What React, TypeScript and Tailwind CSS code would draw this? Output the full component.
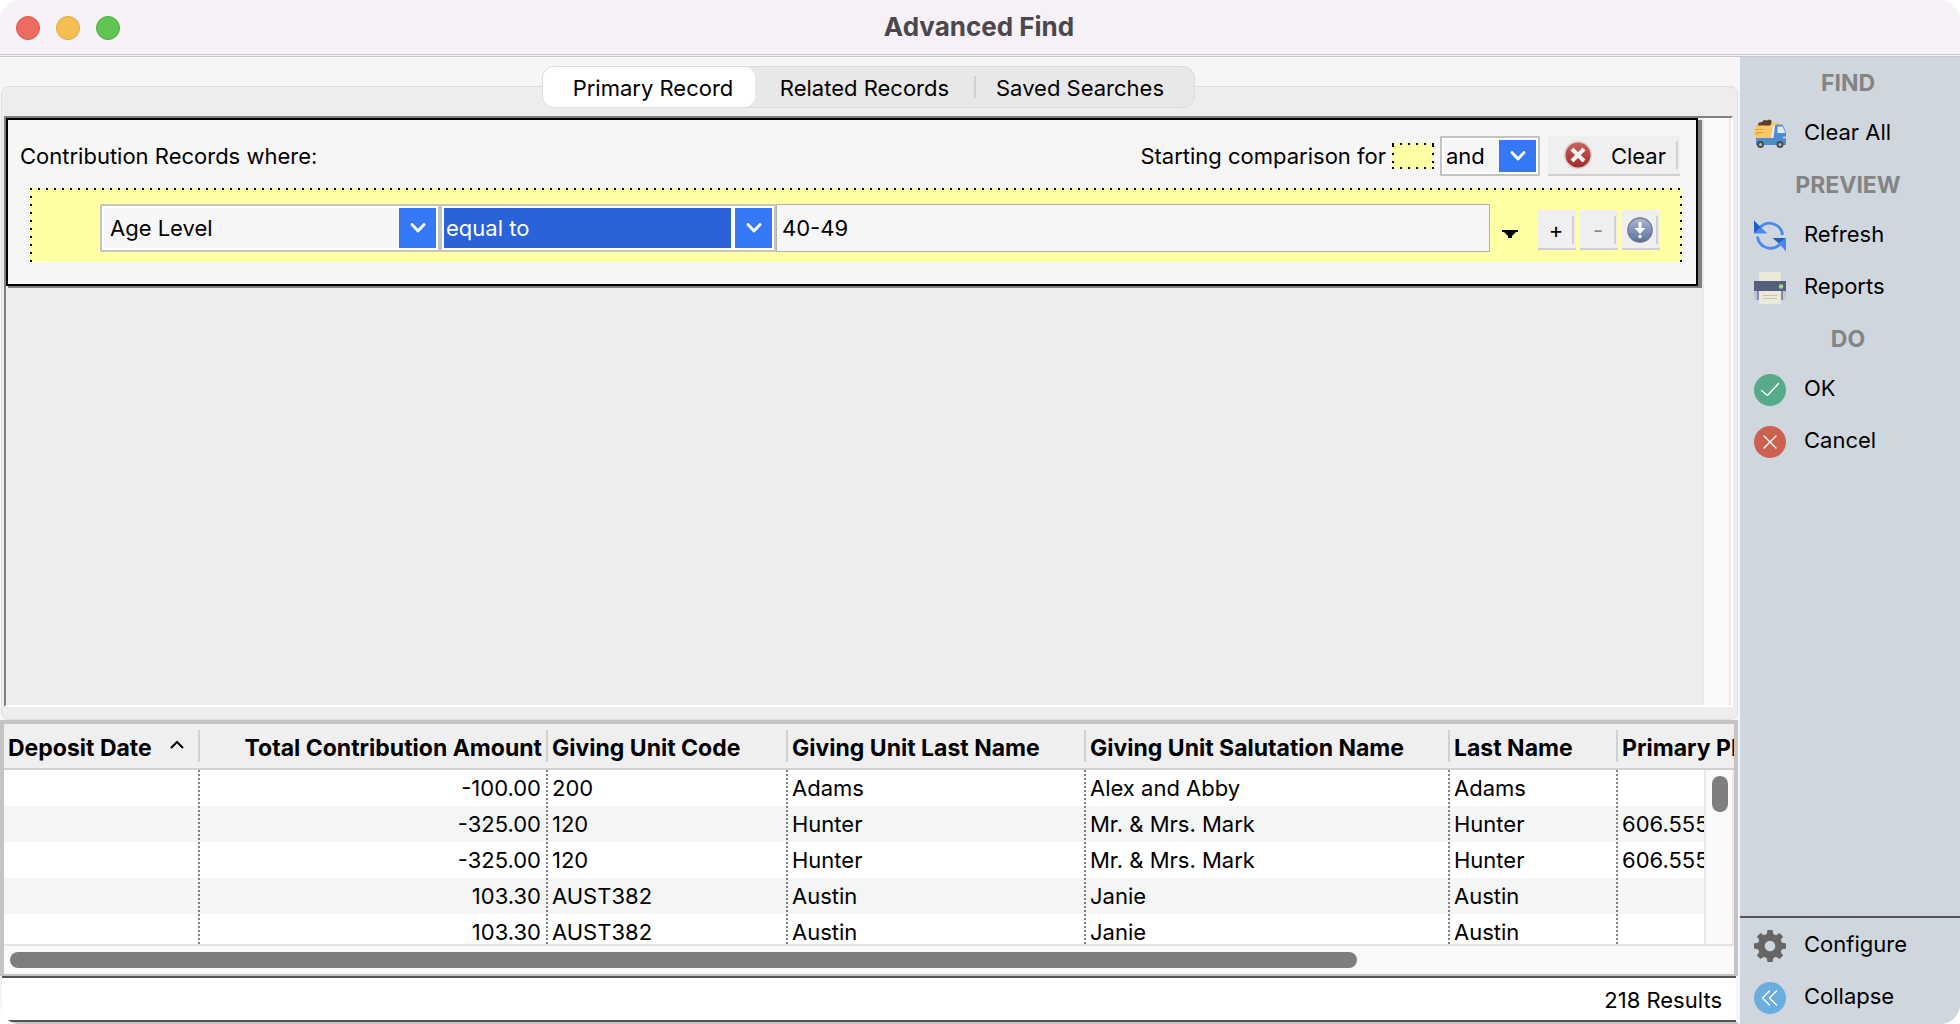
import React from "react";

const FONT = "font-[Inter,'Liberation_Sans',sans-serif]";

const dotsX = "bg-[repeating-linear-gradient(90deg,#000_0_2px,transparent_2px_8px)]";
const dotsY = "bg-[repeating-linear-gradient(180deg,#000_0_2px,transparent_2px_8px)]";

function TruckIcon() {
  return (
    <svg viewBox="0 0 32 32" className="size-8 shrink-0" aria-hidden="true">
      <path d="M3.500 8 5 4.500l3-.5 2-2 3 .5L15 1.500l2.500 1V6L15 9H4z" fill="#5f3c28" />
      <path d="M3 7.500h13l2.500-3h6L19 21H2Q1 19 1 17l-1-1 1-2-1-2 1-2z" fill="#f9c963" />
      <path d="M1 11.500h8M2 14.500h8M1 16h4" stroke="#dba049" strokeWidth="1" />
      <path d="M16.500 21 19 7.500h4v13z" fill="#e6ebf2" />
      <path d="M21 8q0-1.500 1.500-1.500H27q1.500 0 2.200 1.500L32 14v13H2v-7h17.500z" fill="#4c8cd2" />
      <path d="M23.500 8.500h5L31.500 15h-8z" fill="#dfe9f3" />
      <path d="M29 18.500h3v2h-3z" fill="#a8cdf0" />
      <circle cx="6.500" cy="26.500" r="3.500" fill="#4a4a4a" />
      <circle cx="6.500" cy="26.500" r="1.500" fill="#bbb" />
      <circle cx="26" cy="26.500" r="3.500" fill="#4a4a4a" />
      <circle cx="26" cy="26.500" r="1.500" fill="#bbb" />
    </svg>
  );
}
function RefreshIcon() {
  return (
    <svg viewBox="0 0 32 32" className="size-8 shrink-0" aria-hidden="true">
      <path d="M6 7.500A13 13 0 0 1 28.500 15" fill="none" stroke="#4788f4" strokeWidth="2.800" />
      <path d="M26 24A13 13 0 0 1 3.500 16.500" fill="none" stroke="#4788f4" strokeWidth="2.800" />
      <path d="M0 .5v13L7 7.500z" fill="#1f5fc8" />
      <path d="M0 13.500h13.500L7 7.500z" fill="#4788f4" />
      <path d="M18.500 18H32l-7 5.500z" fill="#1f5fc8" />
      <path d="M32 18v13.500l-7-8z" fill="#4788f4" />
    </svg>
  );
}
function PrinterIcon() {
  return (
    <svg viewBox="0 0 32 32" className="size-8 shrink-0" aria-hidden="true">
      <path d="M0 18h32v8l-2 2H2l-2-2z" fill="#c3c5c7" />
      <path d="M3 18h26v10H3z" fill="#7f8ac0" />
      <path d="M5 0h22v10H5z" fill="#ece9d8" />
      <path d="M0 9h32v10H0z" fill="#575f80" />
      <path d="M5 19h22v13H5z" fill="#ece9d8" />
      <path d="M9 23.500h14M9 26.500h14" stroke="#c9c5ac" strokeWidth="1" />
      <circle cx="27" cy="14.500" r="2.200" fill="#a4e06a" />
    </svg>
  );
}
function RoundIcon({ fill, d }: { fill: string; d: string }) {
  return (
    <svg viewBox="0 0 32 32" className="size-8 shrink-0" aria-hidden="true">
      <circle cx="16" cy="16" r="16" fill={fill} />
      <path d={d} fill="none" stroke="#fff" strokeWidth="1.300" strokeLinecap="round" strokeLinejoin="round" />
    </svg>
  );
}
function GearIcon() {
  return (
    <svg viewBox="0 0 32 32" className="size-8 shrink-0" aria-hidden="true">
      <g fill="#666">
        {[0, 45, 90, 135].map((a) => (
          <path key={a} d="M12.500 5 13.500 0h5l1 5v22l-1 5h-5l-1-5z" transform={`rotate(${a} 16 16)`} />
        ))}
        <circle cx="16" cy="16" r="12.200" />
      </g>
      <circle cx="16" cy="16" r="5.300" fill="#d0d6de" />
    </svg>
  );
}
function Chevron() {
  return (
    <svg viewBox="0 0 16 10" className="h-[10px] w-4" aria-hidden="true">
      <path d="m2 1.500 6 6.500 6-6.500" fill="none" stroke="#fff" strokeWidth="2.800" strokeLinecap="round" strokeLinejoin="round" />
    </svg>
  );
}

function Picker({ label, value, className, textClass }: { label: string; value: string; className: string; textClass: string }) {
  return (
    <div className={`relative flex shrink-0 border-2 border-[#c4c4c4] bg-white p-[2px] ${className}`}>
      <select aria-label={label} defaultValue={value} className={`min-w-0 flex-1 appearance-none outline-none ${textClass}`}>
        <option>{value}</option>
      </select>
      <span className="pointer-events-none flex w-[37px] shrink-0 items-center justify-center bg-[#3478f6]">
        <Chevron />
      </span>
    </div>
  );
}

function SmallButton({ label, children }: { label: string; children: React.ReactNode }) {
  return (
    <button aria-label={label} className="flex h-10 w-[38px] border-b-2 border-[#d0d0d0] bg-[#efefef] py-1.5 pr-0.5">
      <span className="flex h-7 flex-1 items-center justify-center border-r-2 border-[#d0d0d0] pl-0.5">{children}</span>
    </button>
  );
}

function SideHeading({ children }: { children: React.ReactNode }) {
  return <h2 className="flex h-[50px] items-center justify-center pr-1 pb-px text-[23px] font-bold text-[#848484]">{children}</h2>;
}
function SideItem({ icon, children }: { icon: React.ReactNode; children: React.ReactNode }) {
  return (
    <button className="flex h-[52px] w-full items-center gap-[18px] pl-[14px] text-left">
      {icon}
      <span className="pb-1">{children}</span>
    </button>
  );
}

const columns = [
  { name: "Deposit Date", w: "w-[196px]" },
  { name: "Total Contribution Amount", w: "w-[348px]" },
  { name: "Giving Unit Code", w: "w-[240px]" },
  { name: "Giving Unit Last Name", w: "w-[298px]" },
  { name: "Giving Unit Salutation Name", w: "w-[364px]" },
  { name: "Last Name", w: "w-[168px]" },
  { name: "Primary Phone", w: "" },
];
const rows = [
  ["", "-100.00", "200", "Adams", "Alex and Abby", "Adams", ""],
  ["", "-325.00", "120", "Hunter", "Mr. & Mrs. Mark", "Hunter", "606.555"],
  ["", "-325.00", "120", "Hunter", "Mr. & Mrs. Mark", "Hunter", "606.555"],
  ["", "103.30", "AUST382", "Austin", "Janie", "Austin", ""],
  ["", "103.30", "AUST382", "Austin", "Janie", "Austin", ""],
];

function Criteria() {
  return (
    <section className="mr-1 border-2 border-black bg-[#f6f6f6] px-[14px] pt-4 pb-[22px] shadow-[2px_2px_0_#808080,4px_2px_0_#808080]">
      <div className="flex h-10 items-center justify-end pr-0.5">
        <span className="mr-auto -ml-0.5">Contribution Records where:</span>
        <span>Starting comparison for</span>
        <span className="mx-1.5 flex h-[26px] w-[42px] flex-col bg-[#ffffa3]">
          <span className={`h-0.5 ${dotsX}`} />
          <span className="flex flex-1 justify-between">
            <span className={`w-0.5 ${dotsY}`} />
            <span className={`w-0.5 ${dotsY}`} />
          </span>
          <span className={`h-0.5 ${dotsX}`} />
        </span>
        <Picker label="Join" value="and" className="h-10 w-[100px]" textClass="pl-0.5 bg-[#f6f6f6]" />
        <button className="ml-2 flex h-10 w-[132px] items-center border-b-2 border-[#d0d0d0] bg-[#efefef] pr-0.5 pl-4">
          <svg viewBox="0 0 28 28" className="size-7" aria-hidden="true">
            <defs><linearGradient id="stop" x2="0" y2="1"><stop stopColor="#c4625d" /><stop offset="1" stopColor="#a52a25" /></linearGradient></defs>
            <circle cx="14" cy="14" r="14" fill="#d6d2d2" />
            <circle cx="14" cy="14" r="12.500" fill="url(#stop)" />
            <path d="m8 8 12 12m0-12L8 20" stroke="#f4f4f4" strokeWidth="4" />
          </svg>
          <span className="ml-auto flex h-7 items-center border-r-2 border-[#d0d0d0] pt-0.5 pr-2.5">Clear</span>
        </button>
      </div>
      <div className="mt-3 ml-2 flex h-[74px] flex-col bg-[#ffffa3]">
        <span className={`h-0.5 ${dotsX}`} />
        <div className="flex flex-1">
          <span className={`mt-1.5 w-0.5 ${dotsY}`} />
          <div className="flex flex-1 items-center pt-1 pr-5 pl-[68px]">
            <div className="flex h-12 flex-1">
              <Picker label="Field" value="Age Level" className="w-[340px]" textClass="bg-[#f6f6f6] pl-1.5" />
              <Picker label="Operator" value="equal to" className="w-[336px]" textClass="mr-1 bg-[#2962d9] pl-0.5 text-white" />
              <input aria-label="Value" defaultValue="40-49" className="min-w-0 flex-1 border border-[#b0b0b0] bg-[#f6f6f6] px-[5px] outline-none" />
            </div>
            <button aria-label="Show values" className="flex w-12 pt-3 pl-3">
              <svg viewBox="0 0 16 8" className="h-2 w-4" aria-hidden="true"><path d="M0 0h16v2h-2L10 6v2H6V6L2 2H0z" /></svg>
            </button>
            <div className="flex gap-1 pt-1">
              <SmallButton label="Add">+</SmallButton>
              <SmallButton label="Remove"><span className="text-[#8c8c8c]">-</span></SmallButton>
              <SmallButton label="Insert">
                <svg viewBox="0 0 26 26" className="size-[26px]" aria-hidden="true">
                  <defs><linearGradient id="orb" x2="0" y2="1"><stop stopColor="#a9b9d2" /><stop offset="1" stopColor="#5a7098" /></linearGradient></defs>
                  <circle cx="13" cy="13" r="12.200" fill="url(#orb)" stroke="#66748f" strokeWidth="1.200" />
                  <path d="M11.500 5h3v6h4L13 17l-5.500-6h4z" fill="#fff" />
                  <circle cx="13" cy="19.500" r="1.800" fill="#fff" />
                </svg>
              </SmallButton>
            </div>
          </div>
          <span className={`mt-1.5 w-0.5 ${dotsY}`} />
        </div>
      </div>
    </section>
  );
}

export default function App() {
  return (
    <div className="min-h-screen bg-white">
      <div className={`flex min-h-screen flex-col overflow-hidden rounded-[20px] bg-[#f6f6f6] text-[22px] leading-7 text-black ${FONT}`}>
        <header className="flex h-[57px] items-center gap-4 border-b-3 border-double border-[#cac4cc] bg-[#f6f0f7] pt-0.5 pl-4">
          <button aria-label="Close" className="size-6 rounded-full border border-[#d8564b] bg-[#ed6b60]" />
          <button aria-label="Minimize" className="size-6 rounded-full border border-[#dca73f] bg-[#f5bf4f]" />
          <button aria-label="Zoom" className="size-6 rounded-full border border-[#4fac40] bg-[#61c554]" />
          <h1 className="mr-[138px] flex-1 pb-0.5 text-center text-[26px] font-bold text-[#4b474c]">Advanced Find</h1>
        </header>

        <div className="flex flex-1">
          <main className="flex min-w-0 flex-1 flex-col pr-0.5">
            <div className="flex flex-1 flex-col pt-[29px] pl-px">
              <div className="flex flex-1 flex-col rounded-[8px] border border-[#dedede] bg-[#ededed] pr-1 pb-3 pl-0.5">
                <nav role="tablist" className="-mt-[21px] mb-2 flex h-[42px] self-center rounded-[12px] border border-[#dcdcdc] bg-[#e8e8e8] pr-[30px]">
                  <button role="tab" aria-selected="true" className="w-[212px] rounded-[11px] bg-white pt-0.5 pl-2">Primary Record</button>
                  <button role="tab" aria-selected="false" className="w-[219px] pt-0.5">Related Records</button>
                  <span className="my-[9px] w-0.5 bg-[#d0d0d0]" />
                  <button role="tab" aria-selected="false" className="pt-0.5 pl-5">Saved Searches</button>
                </nav>
                <div className="flex flex-1 border-2 border-t-[#808080] border-r-white border-b-white border-l-[#808080]">
                  <div className="min-w-0 flex-1">
                    <Criteria />
                  </div>
                  <div className="w-[29px] border-x-2 border-[#e9e9e9] bg-[#fafafa]" />
                </div>
              </div>
            </div>

            <div className="border-4 border-b-2 border-[#c4c4c4] bg-[#fafafa]">
              <div className="relative h-[222px] overflow-hidden border-b-2 border-[#e4e4e4]">
                <table className="w-full table-fixed border-separate border-spacing-0 bg-white text-left">
                  <thead>
                    <tr className="h-[46px]">
                      {columns.map((c, i) => (
                        <th key={c.name} scope="col" className={`border-b-2 border-[#d0d0d0] bg-[#efefef] p-0 text-[23px] font-bold whitespace-nowrap ${c.w}`}>
                          <div className={`my-1.5 flex h-8 items-center pt-1 pl-1 ${i < 6 ? "border-r-2 border-[#d0d0d0]" : ""} ${i === 1 ? "justify-end pr-1" : ""}`}>
                            {c.name}
                            {i === 0 && (
                              <svg viewBox="0 0 14 10" className="mb-1.5 ml-[18px] h-[10px] w-[14px]" aria-hidden="true">
                                <path d="m1 8 6-6 6 6" fill="none" stroke="#000" strokeWidth="2" />
                              </svg>
                            )}
                          </div>
                        </th>
                      ))}
                    </tr>
                  </thead>
                  <tbody>
                    {rows.map((r, n) => (
                      <tr key={n} className={n % 2 ? "bg-[#f4f5f5]" : "bg-white"}>
                        {r.map((v, i) => (
                          <td key={i} className="p-0">
                            <div className="flex h-9">
                              <span className={`min-w-0 flex-1 pt-1 pl-1 whitespace-nowrap ${i === 1 ? "pr-[5px] text-right" : ""}`}>{v}</span>
                              {i < 6 && <span className="w-0.5 bg-[repeating-linear-gradient(180deg,#808080_0_2px,transparent_2px_4px)]" />}
                            </div>
                          </td>
                        ))}
                      </tr>
                    ))}
                  </tbody>
                </table>
                <div className="absolute top-[46px] right-0 bottom-0 w-[30px] border-x-2 border-[#e9e9e9] bg-[#fafafa] px-1.5 pt-1.5">
                  <div className="h-9 w-4 rounded-full bg-[#7e7e7e]" />
                </div>
              </div>
              <div className="h-7 px-1.5 py-1.5">
                <div className="h-4 w-[78.4%] rounded-full bg-[#7e7e7e]" />
              </div>
            </div>
            <footer className="mx-0.5 flex h-[46px] items-center justify-end border-y-2 border-[#545454] bg-white pt-0.5 pr-3.5">
              218 Results
            </footer>
            <div className="h-0.5 bg-[#c4c4c4]" />
          </main>

          <aside className="flex w-[220px] shrink-0 flex-col bg-[#d0d6de] pt-px">
            <SideHeading>FIND</SideHeading>
            <SideItem icon={<TruckIcon />}>Clear All</SideItem>
            <SideHeading>PREVIEW</SideHeading>
            <SideItem icon={<RefreshIcon />}>Refresh</SideItem>
            <SideItem icon={<PrinterIcon />}>Reports</SideItem>
            <SideHeading>DO</SideHeading>
            <SideItem icon={<RoundIcon fill="#56ab8a" d="m7.500 16.500 6 5L24.500 9.500" />}>OK</SideItem>
            <SideItem icon={<RoundIcon fill="#cb6150" d="m10 10 12 12m0-12L10 22" />}>Cancel</SideItem>
            <div className="mt-auto border-t-2 border-[#545454] pt-0.5">
              <SideItem icon={<GearIcon />}>Configure</SideItem>
              <SideItem icon={<RoundIcon fill="#6aaee0" d="m15.500 9-7 7 7 7M22.500 9l-7 7 7 7" />}>Collapse</SideItem>
            </div>
          </aside>
        </div>
      </div>
    </div>
  );
}
